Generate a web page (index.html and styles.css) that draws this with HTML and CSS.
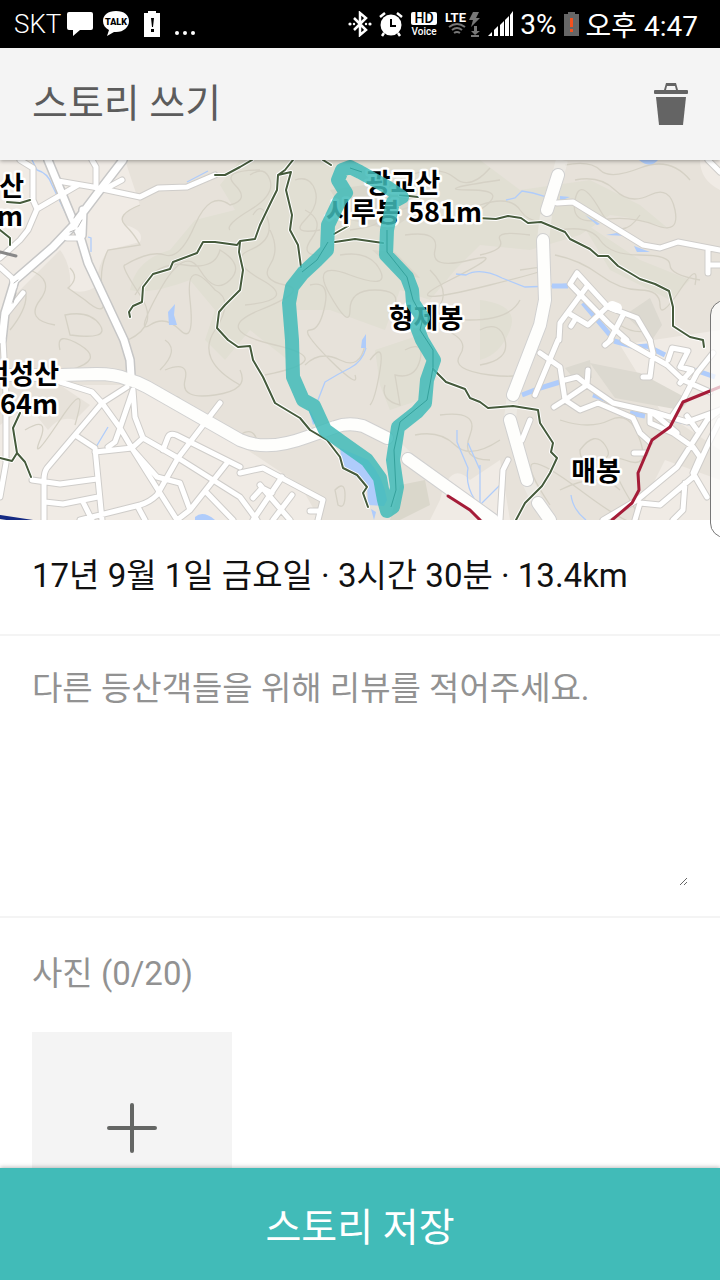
FILE: index.html
```
<!DOCTYPE html>
<html lang="ko">
<head>
  <meta charset="UTF-8">
  <title>스토리 쓰기</title>
  <meta name="viewport" content="width=device-width, initial-scale=1.0">
  <link rel="stylesheet" href="styles.css">
</head>
<body>
  <div class="status-bar">
    <div class="status-left">
      <span class="carrier">SKT</span>
      <svg width="26" height="26" viewBox="0 0 26 26" fill="#fff"><path d="M2 1h22q2 0 2 2v14q0 2-2 2H13l-7 6v-6H2q-2 0-2-2V3q0-2 2-2z"/></svg>
      <svg class="talk" width="28" height="26" viewBox="0 0 28 26"><path fill="#fff" d="M14 0c8 0 13 4 13 10s-5 11-13 11h-2l-7 4 2-6C3 17 1 14 1 10 1 4 6 0 14 0z"/><text x="14" y="14" text-anchor="middle">TALK</text></svg>
      <svg class="low" width="18" height="26" viewBox="0 0 18 26"><path fill="#fff" d="M5 0h8v2h4v24H1V2h4z"/><path fill="#000" d="M8 7h3l-1 9H9zM8 18h3v3H8z"/></svg>
      <svg class="more" width="22" height="26" viewBox="0 0 22 26" fill="#fff"><circle cx="3" cy="22" r="2"/><circle cx="11" cy="22" r="2"/><circle cx="19" cy="22" r="2"/></svg>
    </div>
    <div class="status-right">
      <svg width="24" height="26" viewBox="0 0 24 26" fill="none" stroke="#fff" stroke-width="2.500"><path d="M6 7l12 12-6 5V2l6 5L6 19"/><g fill="#fff" stroke="none"><circle cx="2" cy="13" r="1.600"/><circle cx="6" cy="13" r="1.200"/><circle cx="22" cy="13" r="1.600"/><circle cx="18" cy="13" r="1.200"/></g></svg>
      <svg width="24" height="26" viewBox="0 0 24 26"><circle cx="12" cy="14" r="10.500" fill="#fff"/><path d="M1 6l5-4M23 6l-5-4M5 22l-2 3M19 22l2 3" stroke="#fff" stroke-width="2.500"/><path d="M12 8v7h5" fill="none" stroke="#000" stroke-width="2"/></svg>
      <svg class="hd" width="28" height="26" viewBox="0 0 28 26"><rect x="1" y="1" width="26" height="13" rx="2" fill="#fff"/><text class="hd-text" x="14" y="12" text-anchor="middle">HD</text><text class="voice-text" x="14" y="24" text-anchor="middle">Voice</text></svg>
      <svg class="lte" width="36" height="26" viewBox="0 0 36 26"><text x="0" y="11">LTE</text><g fill="none" stroke="#777" stroke-width="2"><path d="M4 16q8-6 16 0M7 19q5-4 10 0M9 22q3-2 6 0"/></g><path fill="#777" d="M28 1h6l-3 6h4l-9 9 2-7h-4zM29 15h3v5h3l-5 4-4-4h3zM26 24h8v2h-8z"/></svg>
      <svg width="25" height="26" viewBox="0 0 25 26" fill="#fff"><path d="M0 25l4-4v4zM6 19l4-4v10H6zM12 14l4-4v15h-4zM17 9l4-4v20h-4zM22 4l3-4v25h-3z"/></svg>
      <span class="battery-text">3%</span>
      <svg width="15" height="26" viewBox="0 0 15 26"><path fill="#666" d="M4 1h7v2h4v22H0V3h4z"/><path fill="#f4511e" d="M6 7h3v9H6zM6 18h3v3H6z"/></svg>
      <span class="clock">오후 4:47</span>
    </div>
  </div>

  <header class="header">
    <h1>스토리 쓰기</h1>
    <button type="button" class="delete-btn" aria-label="삭제">
      <svg width="34" height="44" viewBox="0 0 34 44" fill="#646464"><path d="M12 1h10l2 7H10zM13 4l-1 4h10l-1-4z" fill-rule="evenodd"/><rect y="8" width="34" height="4" rx="1"/><path d="M2 15h30l-3 28H5z"/></svg>
    </button>
  </header>

  <main class="content">
    <svg class="map" viewBox="0 0 720 360" preserveAspectRatio="xMidYMid slice" role="img" aria-label="등산 경로 지도">
      <defs>
        <!-- roads are stroked twice: grey casing, then white -->
        <g id="roads-small">
          <path d="M20 0L33 8V40L37 49L28 70L20 80L0 98M37 49L78 25M58 21L93 27L140 37L158 28L187 27L215 15M92 0L96 7V27M107 28L122 20M0 107L12 118L14 127M23 133L7 153M67 78H80"/>
          <path d="M3 180L6 235V303L0 337M60 222L92 232L102 243L120 268L133 290L160 333L177 360M127 227L102 243L47 308Q44 312 44 320V360M133 230L120 268L115 282L108 287M133 230L135 257L143 278L132 288L95 292M75 275L95 288L102 360M143 278L178 298L240 337L257 360M220 243L178 298L157 335Q150 342 140 345L80 360M163 290L168 277Q170 273 176 275L240 307M227 303L190 350L177 360M207 333L233 360M32 320L60 324L97 319M45 342L63 344L98 337M83 342L92 360M138 347L145 360M133 290L157 317L180 323L190 350"/>
          <path d="M240 313L263 308L323 340L318 360M282 317L253 360M260 325L290 360M253 338L262 328L272 333M292 335L273 360M310 351H320"/>
          <path d="M557 43L573 42L643 85L660 88L678 82L720 90M708 88V113M708 105H720M708 0L720 12"/>
          <path d="M577 113L570 124L608 163L627 180M577 113L608 147L637 158L650 180M588 125L560 163L559 180M568 153L588 165L607 147M623 155L610 180M576 158L571 166"/>
          <path d="M558 180L535 235M540 193L560 207L565 240L580 250L598 243L633 258L640 273L650 282M565 240L554 247M565 220L577 217L587 225L613 243L653 252L687 262L720 250M588 210L587 225L565 240M623 180L667 205L683 220L710 232M650 180L653 193L650 217L643 217M611 180L605 185M668 200L672 188L688 191L680 207L692 210L680 223M713 193L697 213L683 240L673 255M650 253V263L673 273L693 287L700 297L693 313L707 337M720 250L707 260L677 307L637 340L603 360M640 343L660 345L693 317L710 280L720 260M685 323L683 350L673 360M640 343L635 360M653 253L677 273M687 256L697 270M634 293H645M530 260L522 280M508 300L503 310L500 360"/>
        </g>
        <g id="roads-mid">
          <path d="M48 0L72 58L79 73L88 103L124 180L130 200L131 216M123 0L100 30L72 67L53 87L15 120L5 153L2 180M83 50L82 75"/>
        </g>
        <g id="roads-big">
          <path d="M0 215H60L97 214Q115 214 127 219Q138 222 147 227L240 280Q267 292 307 277L335 267Q348 262 363 266L387 278M408 299L493 360M558 15L547 50M543 80L545 140L540 165L513 235M510 260L527 320M538 343L550 360"/>
        </g>
        <g id="trails">
          <path d="M130 157L129 152L133 146L142 142L143 127L153 114L170 109L173 102L197 93L203 82L215 82L237 85L240 81L255 79L260 65L272 40L277 30L278 15L285 10L293 0M278 15L291 12L286 30L292 55L290 70L298 85L301 107"/>
          <path d="M240 82L239 92L243 110L240 130L225 145L219 152L217 168L228 180L238 187L250 186L253 200L263 217L275 243L300 258L310 270L327 280L340 297L343 308L357 315L367 327L363 333L368 347"/>
          <path d="M215 15L225 15L240 7L252 0M323 0L331 5M335 82L355 79L383 83M334 74L348 66M400 35L418 37"/>
          <path d="M478 58L496 59L508 56L521 58L528 63L541 62L553 67L565 72L570 79L590 89L598 96L608 96L618 106L630 113L640 119L655 124L669 131L673 147L673 166L690 177L703 180L704 187"/>
          <path d="M433 209L446 222L465 229L470 238L480 242L488 248L513 246L538 250L540 263L553 283L551 292L557 298L550 313L542 326L525 343L516 360"/>
          <path d="M20 253L13 268L17 293L12 301L0 298M17 293L25 302L31 317M7 42L20 43L30 40M0 70L10 78L10 85"/>
        </g>
      </defs>

      <rect width="720" height="360" fill="#e7e2da"/>
      <g fill="#f0ebe5">
        <path d="M0 0H125L140 45Q115 55 125 65Q145 70 140 82L108 90Q95 110 98 125Q85 135 70 130Q72 105 60 90L0 150z"/>
        <path d="M0 265L28 245L48 270Q60 255 75 260L90 245L60 225L130 225L240 285L300 325L320 360H0z"/>
        <path d="M440 340Q450 300 470 320L500 300L510 360H430zM640 350L665 300L720 320V360H640zM700 0H720V30Q700 20 700 0zM620 185L720 170V290L660 250z"/>
      </g>
      <g fill="#e1dfd3">
        <path d="M240 0H480L520 30L590 20L640 45L670 70Q650 60 610 55L580 75L530 90L480 85L455 110L430 140L400 130L385 170L330 150L290 150L288 200L250 170L225 200L205 180L215 150L190 120Q150 135 130 130Q135 100 170 90L195 60L235 50L220 25z"/>
        <path d="M375 190L420 175L440 200L420 240L390 250L380 225zM580 60L640 100L690 120L670 140L610 110zM480 140Q520 145 510 170T480 200z"/>
      </g>
      <g fill="#dad7cb">
        <path d="M330 30L400 20L420 50L390 70L350 60zM372 90L395 92L420 118L400 115zM400 325L425 320L430 345L400 360H390z"/>
      </g>
      <g class="contours">
        <path d="M140 45Q115 55 125 65T140 85L108 90Q98 110 103 135T85 140L68 128Q80 118 70 108M128 180Q160 165 140 135T125 105Q150 90 165 95T195 65T230 45Q250 40 235 25T260 10"/>
        <path d="M135 135Q155 100 185 105T220 90Q245 105 230 120T200 110T160 130T150 165T180 170T190 140T215 130Q235 140 215 170T240 225M30 110Q55 120 40 140T55 165M10 170Q30 145 25 130M65 155Q90 150 100 165T70 175z"/>
        <path d="M250 15Q265 5 270 20T250 50T230 70M253 55Q262 40 268 60T250 90T262 120T245 145M295 20Q310 15 315 30T305 60T320 70M270 70Q280 90 270 105T285 125T260 150T275 185T265 215"/>
        <path d="M305 50Q325 60 312 78T320 95M345 50Q360 45 375 55T350 70M340 95Q370 90 380 110T350 115T330 135T350 150T375 130T395 145M310 125Q330 120 325 145T310 170T330 200T355 215M305 205Q320 190 340 200T365 185"/>
        <path d="M400 50Q430 40 440 55T480 50T470 30T500 20M410 15Q440 5 455 18T490 8M405 75Q440 70 435 90T470 100T450 120T490 125T520 110M430 110Q450 130 440 145T470 160T520 140M405 190Q425 180 420 200T395 215L400 245Q380 240 385 225M370 200Q385 180 380 210T370 245"/>
        <path d="M445 170Q470 180 460 195T490 215T530 205M480 45Q510 35 520 50T550 60M575 20Q600 15 615 30T650 35T675 50T655 65T600 60T575 40T600 50T640 55M560 70Q590 65 600 80T640 95T670 105T700 120M565 5Q590 0 600 10T640 8T690 20"/>
        <path d="M480 95Q505 90 500 80T530 75M555 95Q580 100 600 115T640 130T660 145T680 130T695 125M620 165Q635 175 650 170M640 230Q660 240 670 230M480 170Q500 160 505 180T480 205M580 290Q595 270 605 285T595 300Q580 305 580 290zM560 260Q590 270 610 260T640 280T625 300T630 340T580 330T550 345M560 330Q600 310 620 330"/>
        <path d="M160 210Q180 190 165 180M60 190Q55 170 80 185T70 210M165 210Q190 200 185 220T215 235T240 210M165 240Q185 230 180 250M25 270Q50 255 40 280T60 260T75 265M440 255Q480 250 470 275T490 300M335 330Q345 320 345 335T338 345zM240 275Q255 265 258 285M415 275Q440 270 455 285T500 280"/>
      </g>

      <g class="urban">
        <path d="M625 155L650 138L662 165L652 180zM565 208L590 200L592 218L575 220zM590 203L640 213L690 240L680 250L615 238z"/>
      </g>
      <g class="water">
        <path d="M340 288L368 300Q384 318 387 340L384 346L368 345L367 325L350 313L342 305z"/>
        <path d="M168 152L175 144L174 155L177 165L169 165zM361 188L362 180L366 174V188zM639 0H658Q650 9 639 0zM195 357Q203 350 215 360H195zM308 247L313 265L316 262zM371 349L376 352L374 360z"/>
        <path d="M560 36L570 37L560 41zM585 55L600 64L597 65zM606 75L622 72L627 76zM634 86L650 92L637 92z"/>
      </g>
      <g class="streams">
        <path d="M32 0L37 10Q48 13 52 25L67 56M88 77L91 78V92M187 22L208 11M366 188Q362 202 350 208T325 222L318 240M456 114L466 115Q480 107 502 118L525 127L552 126L568 124M506 40L515 38L522 31L533 33L547 37M108 267L96 287M457 270V282L468 308Q465 325 475 340M468 283L480 310M480 305V345L500 325M571 335Q573 350 586 360"/>
        <path class="river" d="M552 126H568M583 143L610 175M522 235L540 228L560 222M593 235L610 241M614 181L635 187L647 186L665 195M630 253L645 256M676 260L690 263M695 210L715 217"/>
      </g>

      <path d="M562 0L558 15M546 55L543 80M513 235L510 258M527 320L538 343M387 278L408 298" stroke="#efede8" stroke-width="12" opacity=".7"/>
      <g fill="none" stroke-linecap="round" stroke-linejoin="round">
        <use href="#roads-small" class="casing-small"/>
        <use href="#roads-mid" class="casing-mid"/>
        <use href="#roads-big" class="casing-big"/>
        <use href="#roads-small" class="road-small"/>
        <use href="#roads-mid" class="road-mid"/>
        <use href="#roads-big" class="road-big"/>
        <path d="M612 146L617 148" stroke="#fff" stroke-width="10"/>
        <path d="M74 58L76 54M70 72L75 70M78 67L82 60M14 123L18 120M13 143L16 133" stroke="#bbb"/>
        <path d="M0 92L16 96" stroke="#888" stroke-width="3"/>
        <use href="#trails" class="trail-halo"/>
        <use href="#trails" class="trail"/>
        <path d="M0 357L33 362" stroke="#152a83" stroke-width="4"/>
        <path class="rail" d="M720 227L710 231L683 242L670 267L652 280L638 313L639 330L632 343L612 360M448 336L470 350L480 360"/>
      </g>

      <g class="peaks">
        <text x="24" y="36" text-anchor="end">산</text>
        <text x="23" y="66" text-anchor="end">m</text>
        <text x="59" y="224" text-anchor="end">덕성산</text>
        <text x="58" y="254" text-anchor="end">64m</text>
        <text x="403" y="33" text-anchor="middle">광교산</text>
        <text x="404" y="62" text-anchor="middle">시루봉 581m</text>
        <text x="426" y="168" text-anchor="middle">형제봉</text>
        <text x="596" y="321" text-anchor="middle">매봉</text>
      </g>

      <path class="route" d="M387 351L384 340L380 318L367 300L343 283L325 270L314 246L303 240L293 217L292 180L289 143L292 127L303 113L317 100L327 90L328 65L340 40L346 33L338 20L342 10L350 7L360 12L387 27L402 37L393 42L387 70L386 95L407 117L412 130L413 143L423 158L417 167L422 180L434 200L427 220L425 243L417 252L398 267L393 300L397 327L393 347z"/>
      <path class="route-line" d="M302 112L317 100L328 82M387 70V92L407 117L413 140L423 158L420 170L433 190V208L427 240L400 262L394 290L396 330L391 347M350 8L362 12"/>
    </svg>

    <p class="summary">17년 9월 1일 금요일 · 3시간 30분 · 13.4km</p>

    <form id="story-form" class="story-form" action="#" method="post">
      <div class="review">
        <textarea id="review" name="review" aria-label="리뷰" placeholder="다른 등산객들을 위해 리뷰를 적어주세요."></textarea>
      </div>
      <div class="photos">
        <h2>사진 (0/20)</h2>
        <button type="button" class="add-photo" aria-label="사진 추가">
          <svg width="50" height="50" viewBox="0 0 50 50" stroke="#646664" stroke-width="4" stroke-linecap="round"><path d="M2 25h46M25 2v46"/></svg>
        </button>
      </div>
    </form>
  </main>

  <button type="submit" form="story-form" class="save-btn">스토리 저장</button>
  <div class="edge-panel"></div>
</body>
</html>
```
FILE: styles.css
```
* {
  box-sizing: border-box;
}
html, body {
  height: 100%;
  margin: 0;
}
body {
  display: flex;
  flex-direction: column;
  position: relative;
  overflow: hidden;
  background: #fff;
  color: #111;
  font-family: Roboto, "Noto Sans CJK KR", sans-serif;
}
button {
  border: none;
  padding: 0;
  font-family: inherit;
  cursor: pointer;
}
svg {
  display: block;
}

/* Status bar */
.status-bar {
  display: flex;
  justify-content: space-between;
  align-items: center;
  flex: none;
  height: 48px;
  padding: 0 22px 0 14px;
  background: #000;
  color: #fff;
  white-space: nowrap;
}
.status-left, .status-right {
  display: flex;
  align-items: center;
}
.status-left {
  gap: 9px;
  font-size: 26px;
  font-weight: 300;
}
.status-right {
  gap: 7px;
  font-size: 28px;
}
.low, .more {
  margin-left: 4px;
}
.carrier {
  margin-right: -3px;
}
.talk text {
  font-size: 9px;
  font-weight: 900;
}
.hd-text {
  font-size: 14px;
  font-weight: 500;
}
.voice-text {
  font-size: 10px;
  font-weight: 500;
  fill: #fff;
}
.lte text {
  font-size: 13px;
  font-weight: 700;
  fill: #fff;
}

/* Header */
.header {
  display: flex;
  justify-content: space-between;
  align-items: center;
  flex: none;
  height: 112px;
  padding: 0 32px;
  background: #f4f4f4;
  box-shadow: 0 1px 4px rgba(0,0,0,0.35);
  position: relative;
  z-index: 1;
}
.header h1 {
  margin: 0;
  font-size: 39px;
  font-weight: 400;
  line-height: 56px;
  color: #5c5c5c;
}
.delete-btn {
  background: none;
}

/* Content */
.content {
  flex: 1;
  min-height: 0;
  overflow-y: auto;
  scrollbar-width: none;
}
.map {
  width: 100%;
  aspect-ratio: 2 / 1;
}
.summary {
  margin: 0;
  padding: 32px 32px 34px;
  border-bottom: 2px solid #f4f4f4;
  font-size: 33px;
  line-height: 48px;
}
.review {
  padding: 28px 32px 30px;
  border-bottom: 2px solid #f4f4f4;
}
.review textarea {
  display: block;
  width: 100%;
  height: 222px;
  padding: 0;
  border: none;
  outline: none;
  background: none;
  resize: vertical;
  font-family: inherit;
  font-size: 33px;
  line-height: 50px;
}
.review textarea::placeholder {
  color: #929292;
}
.photos {
  padding: 32px;
}
.photos h2 {
  margin: 0 0 34px;
  font-size: 33px;
  font-weight: 400;
  line-height: 48px;
  color: #929292;
}
.add-photo {
  display: flex;
  justify-content: center;
  align-items: center;
  width: 200px;
  height: 192px;
  background: #f4f4f4;
}
.save-btn {
  flex: none;
  height: 112px;
  background: #41bbb8;
  color: #fff;
  font-size: 39px;
  box-shadow: 0 -1px 4px rgba(0,0,0,0.25);
  position: relative;
}

/* Handle of the phone's edge panel, floats over the page */
.edge-panel {
  position: absolute;
  top: 300px;
  right: -20px;
  width: 30px;
  height: 238px;
  border: 1px solid #777;
  border-radius: 18px;
  background: rgba(255,255,255,0.72);
  z-index: 2;
}

/* Map */
.contours {
  fill: none;
  stroke: #d5d1c5;
  stroke-width: 1.3;
}
.urban {
  fill: #dcd9d0;
}
.water {
  fill: #afccfb;
}
.streams {
  fill: none;
  stroke: #afccfb;
  stroke-width: 1.3;
}
.river {
  stroke-width: 5;
}
.casing-small { stroke: #cfcdca; stroke-width: 7; }
.casing-mid { stroke: #c6c6c6; stroke-width: 10; }
.casing-big { stroke: #d0d0d0; stroke-width: 14; }
.road-small { stroke: #fff; stroke-width: 5; }
.road-mid { stroke: #fff; stroke-width: 7; }
.road-big { stroke: #fefefc; stroke-width: 12; }
.trail-halo { stroke: #fff; stroke-width: 4; }
.trail { stroke: #455a3b; stroke-width: 2; }
.rail {
  stroke: #a51c38;
  stroke-width: 3;
}
.peaks text {
  font-family: "Noto Sans CJK KR", sans-serif;
  font-size: 27px;
  font-weight: 700;
  fill: #000;
  stroke: #fff;
  stroke-width: 5;
  stroke-linejoin: round;
  paint-order: stroke;
}
.route {
  fill: none;
  stroke: #41bbb8;
  stroke-width: 14;
  stroke-linejoin: round;
  opacity: 0.85;
}
.route-line {
  fill: none;
  stroke: #35a19c;
  stroke-width: 1;
}
```
